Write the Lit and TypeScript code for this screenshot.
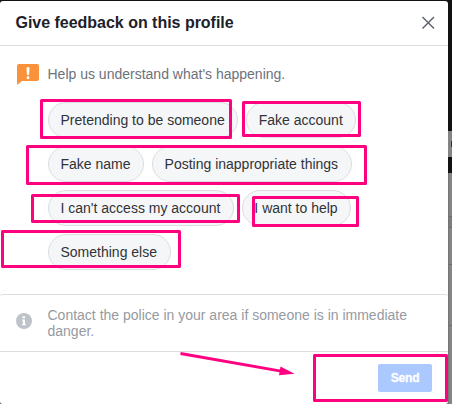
import { LitElement, html, css, svg } from "lit";
import { customElement } from "lit/decorators.js";

const ROWS = [
  ["Pretending to be someone", "Fake account"],
  ["Fake name", "Posting inappropriate things"],
  ["I can't access my account", "I want to help"],
  ["Something else"],
];

// Highlight frames drawn over the dialog: outer x, y, right, bottom.
const FRAMES = [
  [40, 99, 232, 139],
  [242, 101, 361, 137],
  [26, 145, 367, 185],
  [31, 194, 240, 223],
  [252, 196, 359, 227],
  [1, 230, 181, 268],
  [313, 354, 448, 402],
];

@customElement("app-root")
export class AppRoot extends LitElement {
  static styles = css`
    :host {
      display: block;
      position: relative;
      width: 452px;
      height: 404px;
      overflow: hidden;
      font-family: "Liberation Sans", Arial, sans-serif;
      font-size: 14px;
      line-height: 16px;
      background: #111214;
    }
    * { box-sizing: border-box; }
    .backdrop, .marks {
      position: absolute;
      inset: 0;
      width: 452px;
      height: 404px;
    }
    .marks { pointer-events: none; }
    .dialog {
      position: relative;
      display: flex;
      flex-direction: column;
      width: 448px;
      height: 403px;
      margin-top: 1px;
      background: #fff;
      border-radius: 3px;
    }
    .header {
      display: flex;
      align-items: center;
      justify-content: space-between;
      height: 45px;
      padding: 0 13px 1px 15.500px;
      border-bottom: 1px solid #dadde1;
    }
    .title {
      margin: 0;
      font-size: 16px;
      line-height: 20px;
      font-weight: 700;
      letter-spacing: -0.020px;
      color: #1d2129;
    }
    .close, .send { border: 0; font-family: inherit; }
    .close { display: flex; padding: 0; background: none; }
    .content { height: 248px; padding: 17px 16px 0; }
    .prompt { display: flex; height: 23px; color: #6c727b; }
    .prompt svg { flex: none; margin-right: 7.500px; margin-left: 1px; }
    .prompt span { padding-top: 3px; }
    .choices {
      display: flex;
      flex-direction: column;
      gap: 8px;
      margin: 16px 0 0 32px;
    }
    .row { display: flex; gap: 8px; }
    .chip {
      height: 36px;
      padding: 0 12.500px 0 11.500px;
      border: 1px solid #dadde1;
      border-radius: 18px;
      background: #f5f6f7;
      color: #303338;
      font: 14px/34px "Liberation Sans", Arial, sans-serif;
      white-space: nowrap;
    }
    .notice {
      display: flex;
      height: 58px;
      padding: 12px 16px 0;
      border: solid #dadde1;
      border-width: 1px 0;
      border-radius: 3px 3px 0 0;
      color: #969aa2;
    }
    .notice svg { flex: none; margin: 6px 15.500px 0 0; }
    .footer {
      display: flex;
      justify-content: flex-end;
      padding: 12px 16px;
    }
    .send {
      width: 54px;
      height: 28px;
      padding: 0;
      border-radius: 2px;
      background: #abc8ff;
      color: #fff;
      font-size: 12px;
      font-weight: 700;
      letter-spacing: -0.200px;
      -webkit-text-stroke: 0.300px #fff;
    }
  `;

  render() {
    return html`
      <svg class="backdrop" viewBox="0 0 452 404" aria-hidden="true">
        <rect x="440" y="131" width="12" height="26" fill="#858585" />
        <rect x="451" y="141" width="1" height="6" fill="#303236" />
        <rect x="440" y="173" width="12" height="231" fill="#858585" />
        <rect x="448" y="216" width="4" height="12" fill="#7d7d7e" />
        <path d="M448 216.5h4M448 227.5h4M448 264.5h4M448 325.5h4" stroke="#6d6d6e" />
        <rect x="0" y="398" width="8" height="6" fill="#77736b" />
        <path d="M448.5 173V404" stroke="#747474" />
      </svg>
      <section class="dialog" role="dialog">
        <header class="header">
          <h1 class="title">Give feedback on this profile</h1>
          <button class="close" aria-label="Close">
            <svg width="14" height="14" viewBox="0 0 14 14">
              <path d="M1.500 1l11.500 11.500M13 1l-11.500 11.500" fill="none" stroke="#606770" stroke-width="1.500" />
            </svg>
          </button>
        </header>
        <div class="content">
          <div class="prompt">
            <svg width="23" height="23" viewBox="0 0 23 23">
              <path d="M2 1H20Q22 1 22 3V16Q22 18 20 18H5L0 22V3Q0 1 2 1Z" fill="#fa923b" />
              <path d="M9.500 5.200Q9.500 4 11 4T12.500 5.200L12.100 11.500Q12 12.300 11 12.300T9.900 11.500Z" fill="#fff" />
              <circle cx="11" cy="14.700" r="1.450" fill="#fff" />
            </svg>
            <span>Help us understand what's happening.</span>
          </div>
          <div class="choices">
            ${ROWS.map((row) => html`<div class="row">${row.map((label) => html`<button class="chip">${label}</button>`)}</div>`)}
          </div>
        </div>
        <div class="notice">
          <svg width="16" height="16" viewBox="0 0 16 16">
            <circle cx="8" cy="8" r="8" fill="#bec3c9" />
            <path d="M6.500 3.200h2.500v2h-2.500zM6 6.400h3v4.600h.8v1.200H6V11h.8V7.600H6z" fill="#fff" />
          </svg>
          <span>Contact the police in your area if someone is in immediate danger.</span>
        </div>
        <footer class="footer"><button class="send">Send</button></footer>
      </section>
      <svg class="marks" viewBox="0 0 452 404" aria-hidden="true">
        ${FRAMES.map(([l, t, r, b]) => svg`<rect x=${l + 1.5} y=${t + 1.5} width=${r - l - 3} height=${b - t - 3}
          fill="none" stroke="#ff0080" stroke-width="3" stroke-linejoin="round" />`)}
        <path d="M180.500 353.500L281 371.200" stroke="#ff0080" stroke-width="2.800" />
        <path d="M280.500 366.500L294.500 373.700L279 375.300Z" fill="#ff0080" />
      </svg>
    `;
  }
}
